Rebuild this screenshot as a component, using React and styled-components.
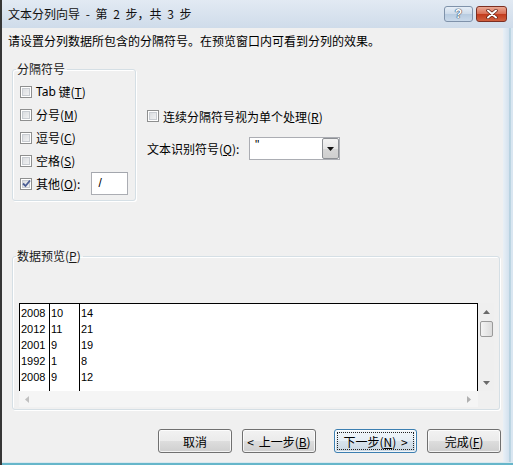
import styled, { createGlobalStyle } from 'styled-components';

const GlobalStyle = createGlobalStyle`
  html, body { margin: 0; padding: 0; background: #fff; }
  body {
    font-family: "Noto Sans CJK SC", "Noto Sans", sans-serif;
    font-size: 12px;
    color: #000;
  }
  * { box-sizing: border-box; }
`;

const Window = styled.div`
  width: 513px;
  height: 465px;
  display: flex;
  flex-direction: column;
  border-left: 2px solid #363636;
  overflow: hidden;
`;

const TitleBar = styled.div`
  height: 28px;
  flex: none;
  display: flex;
  align-items: center;
  padding: 0 6px 0 6px;
  background: linear-gradient(to bottom, #e2eaf3, #cfdcea);
`;

const Title = styled.div`
  flex: 1;
  line-height: 14px;
  color: #111;
  word-spacing: 3px;
`;

const CaptionButtons = styled.div`
  display: flex;
  gap: 3px;
  margin-top: -1px;
`;

const HelpButton = styled.div`
  width: 29px;
  height: 16px;
  border: 1px solid #7f92aa;
  border-radius: 3px;
  background: linear-gradient(to bottom, #e6eef7 0%, #cddbea 50%, #b7cbe0 51%, #c9d9ea 100%);
  display: flex;
  align-items: center;
  justify-content: center;
  font-family: "Liberation Sans", sans-serif;
  font-weight: bold;
  font-size: 12px;
  color: #fff;
  text-shadow: 0 0 1px #33465e, 0 0 1px #33465e, 0 0 1px #33465e;
`;

const CloseButton = styled.div`
  width: 31px;
  height: 16px;
  border: 1px solid #7c2f22;
  border-radius: 3px;
  background: linear-gradient(to bottom, #eaa995 0%, #d86c52 50%, #c23a1c 51%, #d0603f 100%);
  display: flex;
  align-items: center;
  justify-content: center;
`;

const Body = styled.div`
  flex: 1;
  display: flex;
  min-height: 0;
`;

const Content = styled.div`
  flex: 1;
  background: #f0f0f0;
  display: flex;
  flex-direction: column;
  padding: 6px 2px 0 6px;
`;

const RightFrame = styled.div`
  width: 10px;
  flex: none;
  background: linear-gradient(to right, #e9f0f6 0%, #d3e1ee 60%, #9fc4d4 70%, #d9e6f1 80%);
`;

const BottomEdge = styled.div`
  height: 3px;
  flex: none;
  border-top: 1px solid #d9e8ef;
  background: #66b6ca;
`;

const Instruction = styled.div`
  line-height: 14px;
  height: 14px;
`;

const TopSection = styled.div`
  display: flex;
  align-items: flex-start;
  margin: 14px 0 0 4px;
`;

const GroupBox = styled.fieldset`
  margin: 0;
  width: ${p => p.$w}px;
  padding: ${p => p.$pad};
  border: 1px solid #d5dfe5;
  border-radius: 3px;
  box-shadow: inset 1px 1px 0 #fff, 1px 1px 0 #fff;
  min-width: 0;
`;

const Legend = styled.legend`
  padding: 0 2px 0 1px;
  margin-left: ${p => p.$offset}px;
  line-height: 14px;
  font-size: 12px;
  color: #1a1a1a;
`;

const OptionRow = styled.div`
  display: flex;
  align-items: center;
  height: ${p => p.$h || 23}px;
  white-space: nowrap;
`;

const Box = styled.span`
  width: 12px;
  height: 12px;
  flex: none;
  margin-right: 4px;
  border: 1px solid #8e8f8f;
  background: linear-gradient(135deg, #d4d7db 0%, #f7f7f7 100%);
  box-shadow: inset 0 0 0 1px #fff, inset 0 0 0 2px #c8ccd1;
  display: flex;
  align-items: center;
  justify-content: center;
`;

const U = styled.span`
  text-decoration: underline;
  text-underline-offset: 1px;
`;

const Latin = styled.span`
  font-family: "Noto Sans", sans-serif;
`;

const OtherInput = styled.div`
  width: 37px;
  height: 23px;
  margin-left: 11px;
  background: #fff;
  border: 1px solid #abadb3;
  border-top-color: #a3a6ad;
  padding: 3px 0 0 6px;
  line-height: 14px;
  font-family: "Liberation Sans", sans-serif;
`;

const RightCol = styled.div`
  display: flex;
  flex-direction: column;
  margin-left: 11px;
  padding-top: 46px;
  gap: 13px;
`;

const FieldLabel = styled.span`
  width: 102px;
  flex: none;
`;

const Combo = styled.div`
  width: 91px;
  height: 23px;
  display: flex;
  background: #fff;
  border: 1px solid #abadb3;
`;

const ComboText = styled.div`
  flex: 1;
  padding: 1px 0 0 5px;
  line-height: 12px;
  font-family: "Liberation Sans", sans-serif;
`;

const ComboButton = styled.div`
  width: 17px;
  border: 1px solid #8c8f94;
  border-radius: 2px;
  background: linear-gradient(to bottom, #f3f3f3 0%, #e6e6e6 50%, #d6d6d6 51%, #cfcfcf 100%);
  display: flex;
  align-items: center;
  justify-content: center;
`;

const PreviewGroup = styled(GroupBox)`
  margin: 48px 0 0 4px;
`;

const Preview = styled.div`
  display: grid;
  grid-template-columns: 459px 16px;
  grid-template-rows: 88px 16px;
`;

const List = styled.div`
  background: #fff;
  border: 1px solid #000;
  border-bottom: none;
  display: flex;
`;

const Column = styled.div`
  width: ${p => (p.$w ? `${p.$w}px` : 'auto')};
  flex: ${p => (p.$w ? 'none' : 1)};
  border-left: ${p => (p.$line ? '1px solid #000' : 'none')};
  padding: 1px 0 0 1px;
  font-family: "Liberation Sans", sans-serif;
  font-size: 11px;
  line-height: 16px;
`;

const VScroll = styled.div`
  display: flex;
  flex-direction: column;
  align-items: center;
  background: #efefef;
`;

const ArrowCell = styled.div`
  height: 17px;
  width: 100%;
  flex: none;
  display: flex;
  align-items: center;
  justify-content: center;
`;

const Thumb = styled.div`
  width: 13px;
  height: 16px;
  margin-top: 1px;
  border: 1px solid #9a9a9a;
  border-radius: 2px;
  background: linear-gradient(to right, #f4f4f4, #dcdcdc);
`;

const Spacer = styled.div`
  flex: 1;
`;

const HScroll = styled.div`
  display: flex;
  align-items: center;
  justify-content: space-between;
  padding: 0 7px 0 6px;
  background: #f5f5f5;
`;

const Corner = styled.div`
  background: #f0f0f0;
`;

const ButtonRow = styled.div`
  display: flex;
  justify-content: flex-end;
  margin-top: 19px;
`;

const Button = styled.div`
  width: ${p => p.$w}px;
  height: 24px;
  margin-left: ${p => p.$gap}px;
  border: 1px solid ${p => (p.$focus ? '#3c7fb1' : '#707070')};
  border-radius: 3px;
  background: ${p =>
    p.$focus
      ? 'linear-gradient(to bottom, #f1f6fa 0%, #e6eef5 50%, #d8e3ec 51%, #cbd8e3 100%)'
      : 'linear-gradient(to bottom, #f2f2f2 0%, #ebebeb 50%, #dddddd 51%, #cfcfcf 100%)'};
  box-shadow: inset 0 0 0 1px rgba(255, 255, 255, 0.75);
  display: flex;
  align-items: center;
  justify-content: center;
  padding: 2px;
  white-space: nowrap;
  word-spacing: 2px;
`;

const FocusRing = styled.div`
  flex: 1;
  align-self: stretch;
  border: 1px dotted #222;
  display: flex;
  align-items: center;
  justify-content: center;
`;

const Check = () => (
  <svg width="9" height="9" viewBox="0 0 9 9">
    <path d="M1 4.5 L3.5 7 L8 1.5" fill="none" stroke="#4a5d94" strokeWidth="1.8" />
  </svg>
);

const CheckBox = ({ checked, children, h }) => (
  <OptionRow $h={h}>
    <Box>{checked && <Check />}</Box>
    {children}
  </OptionRow>
);

const Arrow = ({ dir, color = '#4d4d4d' }) => {
  const d = {
    up: 'M0 4 L3.5 0 L7 4 Z',
    down: 'M0 0 L7 0 L3.5 4 Z',
    left: 'M4 0 L4 7 L0 3.5 Z',
    right: 'M0 0 L4 3.5 L0 7 Z',
  }[dir];
  const vertical = dir === 'up' || dir === 'down';
  return (
    <svg width={vertical ? 7 : 4} height={vertical ? 4 : 7} viewBox={vertical ? '0 0 7 4' : '0 0 4 7'}>
      <path d={d} fill={color} />
    </svg>
  );
};

const rows = [
  ['2008', '10', '14'],
  ['2012', '11', '21'],
  ['2001', '9', '19'],
  ['1992', '1', '8'],
  ['2008', '9', '12'],
];

export default function App() {
  return (
    <>
      <GlobalStyle />
      <Window>
        <TitleBar>
          <Title>文本分列向导 - 第 2 步，共 3 步</Title>
          <CaptionButtons>
            <HelpButton>?</HelpButton>
            <CloseButton>
              <svg width="12" height="10" viewBox="0 0 12 10">
                <path d="M2 1.5 L10 8.5 M10 1.5 L2 8.5" stroke="#5a1a10" strokeWidth="3.4" strokeLinecap="round" />
                <path d="M2 1.5 L10 8.5 M10 1.5 L2 8.5" stroke="#fff" strokeWidth="2" strokeLinecap="round" />
              </svg>
            </CloseButton>
          </CaptionButtons>
        </TitleBar>
        <Body>
          <Content>
            <Instruction>请设置分列数据所包含的分隔符号。在预览窗口内可看到分列的效果。</Instruction>
            <TopSection>
              <GroupBox $w={124} $pad="4px 0 5px 7px">
                <Legend $offset={-4}>分隔符号</Legend>
                <CheckBox><Latin>Tab</Latin>&nbsp;键(<U>T</U>)</CheckBox>
                <CheckBox>分号(<U>M</U>)</CheckBox>
                <CheckBox>逗号(<U>C</U>)</CheckBox>
                <CheckBox>空格(<U>S</U>)</CheckBox>
                <CheckBox checked>
                  其他(<U>O</U>):
                  <OtherInput>/</OtherInput>
                </CheckBox>
              </GroupBox>
              <RightCol>
                <CheckBox h={16}>连续分隔符号视为单个处理(<U>R</U>)</CheckBox>
                <OptionRow>
                  <FieldLabel>文本识别符号(<U>Q</U>):</FieldLabel>
                  <Combo>
                    <ComboText>"</ComboText>
                    <ComboButton>
                      <Arrow dir="down" color="#111" />
                    </ComboButton>
                  </Combo>
                </OptionRow>
              </RightCol>
            </TopSection>
            <PreviewGroup $w={488} $pad="40px 5px 2px 6px">
              <Legend $offset={-3}>数据预览(<U>P</U>)</Legend>
              <Preview>
                <List>
                  <Column $w={29}>{rows.map((r, i) => <div key={i}>{r[0]}</div>)}</Column>
                  <Column $w={30} $line>{rows.map((r, i) => <div key={i}>{r[1]}</div>)}</Column>
                  <Column $line>{rows.map((r, i) => <div key={i}>{r[2]}</div>)}</Column>
                </List>
                <VScroll>
                  <ArrowCell><Arrow dir="up" color="#6a6a6a" /></ArrowCell>
                  <Thumb />
                  <Spacer />
                  <ArrowCell><Arrow dir="down" color="#6a6a6a" /></ArrowCell>
                </VScroll>
                <HScroll>
                  <Arrow dir="left" color="#c0c0c0" />
                  <Arrow dir="right" color="#b0b0b0" />
                </HScroll>
                <Corner />
              </Preview>
            </PreviewGroup>
            <ButtonRow>
              <Button $w={74} $gap={0}>取消</Button>
              <Button $w={74} $gap={10}>&lt; 上一步(<U>B</U>)</Button>
              <Button $w={83} $gap={18} $focus>
                <FocusRing>下一步(<U>N</U>) &gt;</FocusRing>
              </Button>
              <Button $w={74} $gap={10}>完成(<U>F</U>)</Button>
            </ButtonRow>
          </Content>
          <RightFrame />
        </Body>
        <BottomEdge />
      </Window>
    </>
  );
}
